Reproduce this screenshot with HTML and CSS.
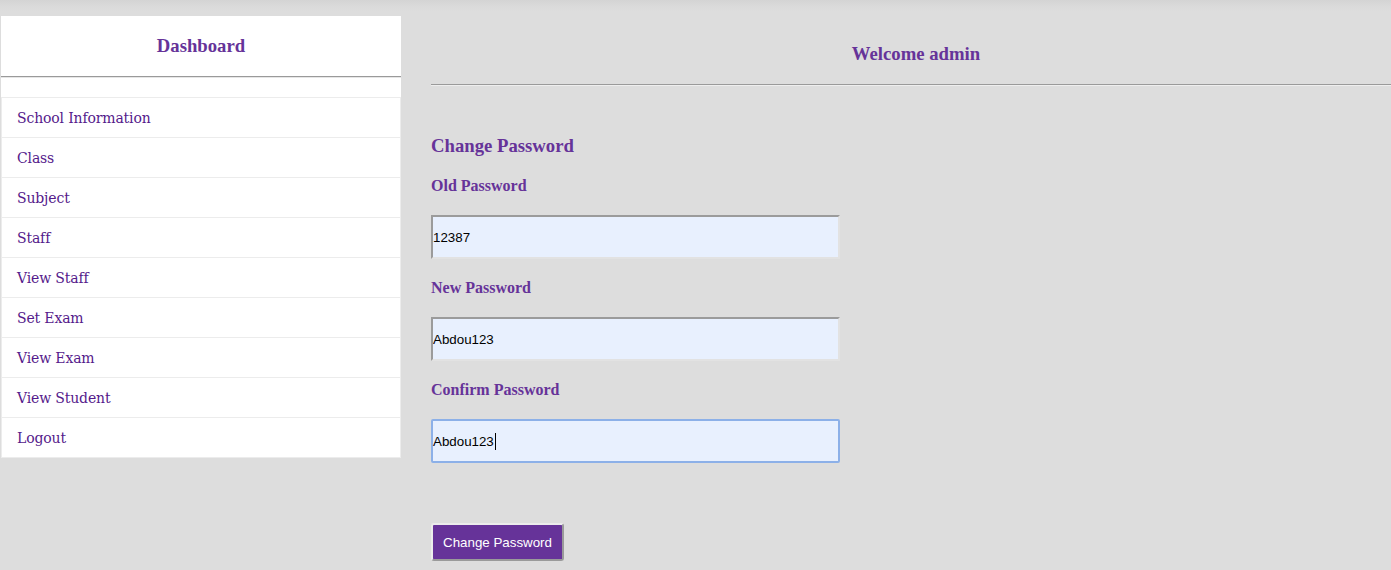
FILE: index.html
```html
<!DOCTYPE html>
<html>
<head>
<meta charset="utf-8">
<title>Change Password</title>
<link rel="stylesheet" href="styles.css">
</head>
<body>
<div class="page">
  <aside class="sidebar">
    <h3 class="side-title">Dashboard</h3>
    <hr class="side-rule">
    <ul class="menu">
      <li class="menu-item"><a href="#">School Information</a></li>
      <li class="menu-item"><a href="#">Class</a></li>
      <li class="menu-item"><a href="#">Subject</a></li>
      <li class="menu-item"><a href="#">Staff</a></li>
      <li class="menu-item"><a href="#">View Staff</a></li>
      <li class="menu-item"><a href="#">Set Exam</a></li>
      <li class="menu-item"><a href="#">View Exam</a></li>
      <li class="menu-item"><a href="#">View Student</a></li>
      <li class="menu-item"><a href="#">Logout</a></li>
    </ul>
  </aside>
  <main class="main">
    <h3 class="welcome">Welcome admin</h3>
    <hr class="main-rule">
    <form class="form">
      <h3 class="form-title">Change Password</h3>
      <label class="label">Old Password</label>
      <input class="field" type="text" value="12387">
      <label class="label">New Password</label>
      <input class="field" type="text" value="Abdou123">
      <label class="label">Confirm Password</label>
      <div class="field field-focus">Abdou123<span class="caret"></span></div>
      <button class="btn" type="button">Change Password</button>
    </form>
  </main>
</div>
</body>
</html>
```

FILE: styles.css
```css
html, body {
  margin: 0;
  padding: 0;
  height: 100%;
}
body {
  background: #dddddd;
  font-family: "Liberation Serif", serif;
  overflow: hidden;
}
.page {
  display: flex;
  align-items: flex-start;
  padding-top: 16px;
  min-height: 570px;
  box-sizing: border-box;
  background: linear-gradient(to bottom, #d4d4d4 0px, #dadada 6px, #dddddd 11px, #dddddd 100%);
}
.sidebar {
  width: 400px;
  margin-left: 1px;
  background: #ffffff;
}
.side-title {
  margin: 0;
  height: 60px;
  line-height: 60px;
  text-align: center;
  font-size: 18.72px;
  font-weight: bold;
  color: #663399;
}
.side-rule {
  margin: 0 0 19px 0;
  border: 0;
  border-top: 1px solid #9a9a9a;
  border-bottom: 1px solid #e6e6e6;
}
.menu {
  list-style: none;
  margin: 0;
  padding: 0;
  border-left: 1px solid #ececec;
  border-right: 1px solid #ececec;
  border-bottom: 1px solid #ececec;
}
.menu-item {
  height: 40px;
  border-top: 1px solid #ececec;
  box-sizing: border-box;
  display: flex;
  align-items: center;
  padding-left: 15px;
}
.menu-item a {
  color: #551a8b;
  text-decoration: none;
  font-family: "DejaVu Serif", serif;
  font-size: 14px;
  letter-spacing: -0.15px;
}
.main {
  flex: 1;
  margin-left: 30px;
}
.welcome {
  margin: 0;
  padding: 27px 0 19px 10px;
  line-height: 22px;
  text-align: center;
  font-size: 18.72px;
  font-weight: bold;
  color: #663399;
}
.main-rule {
  margin: 0;
  border: 0;
  border-top: 1px solid #9a9a9a;
  border-bottom: 1px solid #eeeeee;
}
.form {
  display: flex;
  flex-direction: column;
  align-items: flex-start;
  padding-top: 49px;
}
.form-title {
  margin: 0 0 19px;
  line-height: 22px;
  font-size: 18.72px;
  font-weight: bold;
  color: #663399;
}
.label {
  line-height: 20px;
  font-size: 16px;
  font-weight: bold;
  color: #663399;
  margin-bottom: 19px;
}
.field {
  width: 409px;
  height: 44px;
  box-sizing: border-box;
  margin: 0 0 19px;
  padding: 0;
  background: #e8f0fe;
  border-style: solid;
  border-width: 2px;
  border-top-color: #9b9b9b;
  border-left-color: #9b9b9b;
  border-bottom-color: #e2e2e2;
  border-right-color: #e2e2e2;
  font-family: "Liberation Sans", Arial, sans-serif;
  font-size: 13.33px;
  color: #000000;
  outline: none;
}
.field-focus {
  display: flex;
  align-items: center;
  border: 2px solid #8cb0e8;
  border-radius: 2px;
  margin-bottom: 60px;
}
.caret {
  display: inline-block;
  width: 1px;
  height: 17px;
  background: #000;
  margin-left: 1px;
}
.btn {
  width: 133px;
  height: 38px;
  background: #663399;
  color: #ffffff;
  border-style: solid;
  border-width: 2px;
  border-bottom-color: #9a9a9a;
  border-right-color: #9a9a9a;
  border-top-color: #ececec;
  border-left-color: #ececec;
  border-radius: 3px;
  font-family: "Liberation Sans", Arial, sans-serif;
  font-size: 13.33px;
  padding: 0;
}
```
